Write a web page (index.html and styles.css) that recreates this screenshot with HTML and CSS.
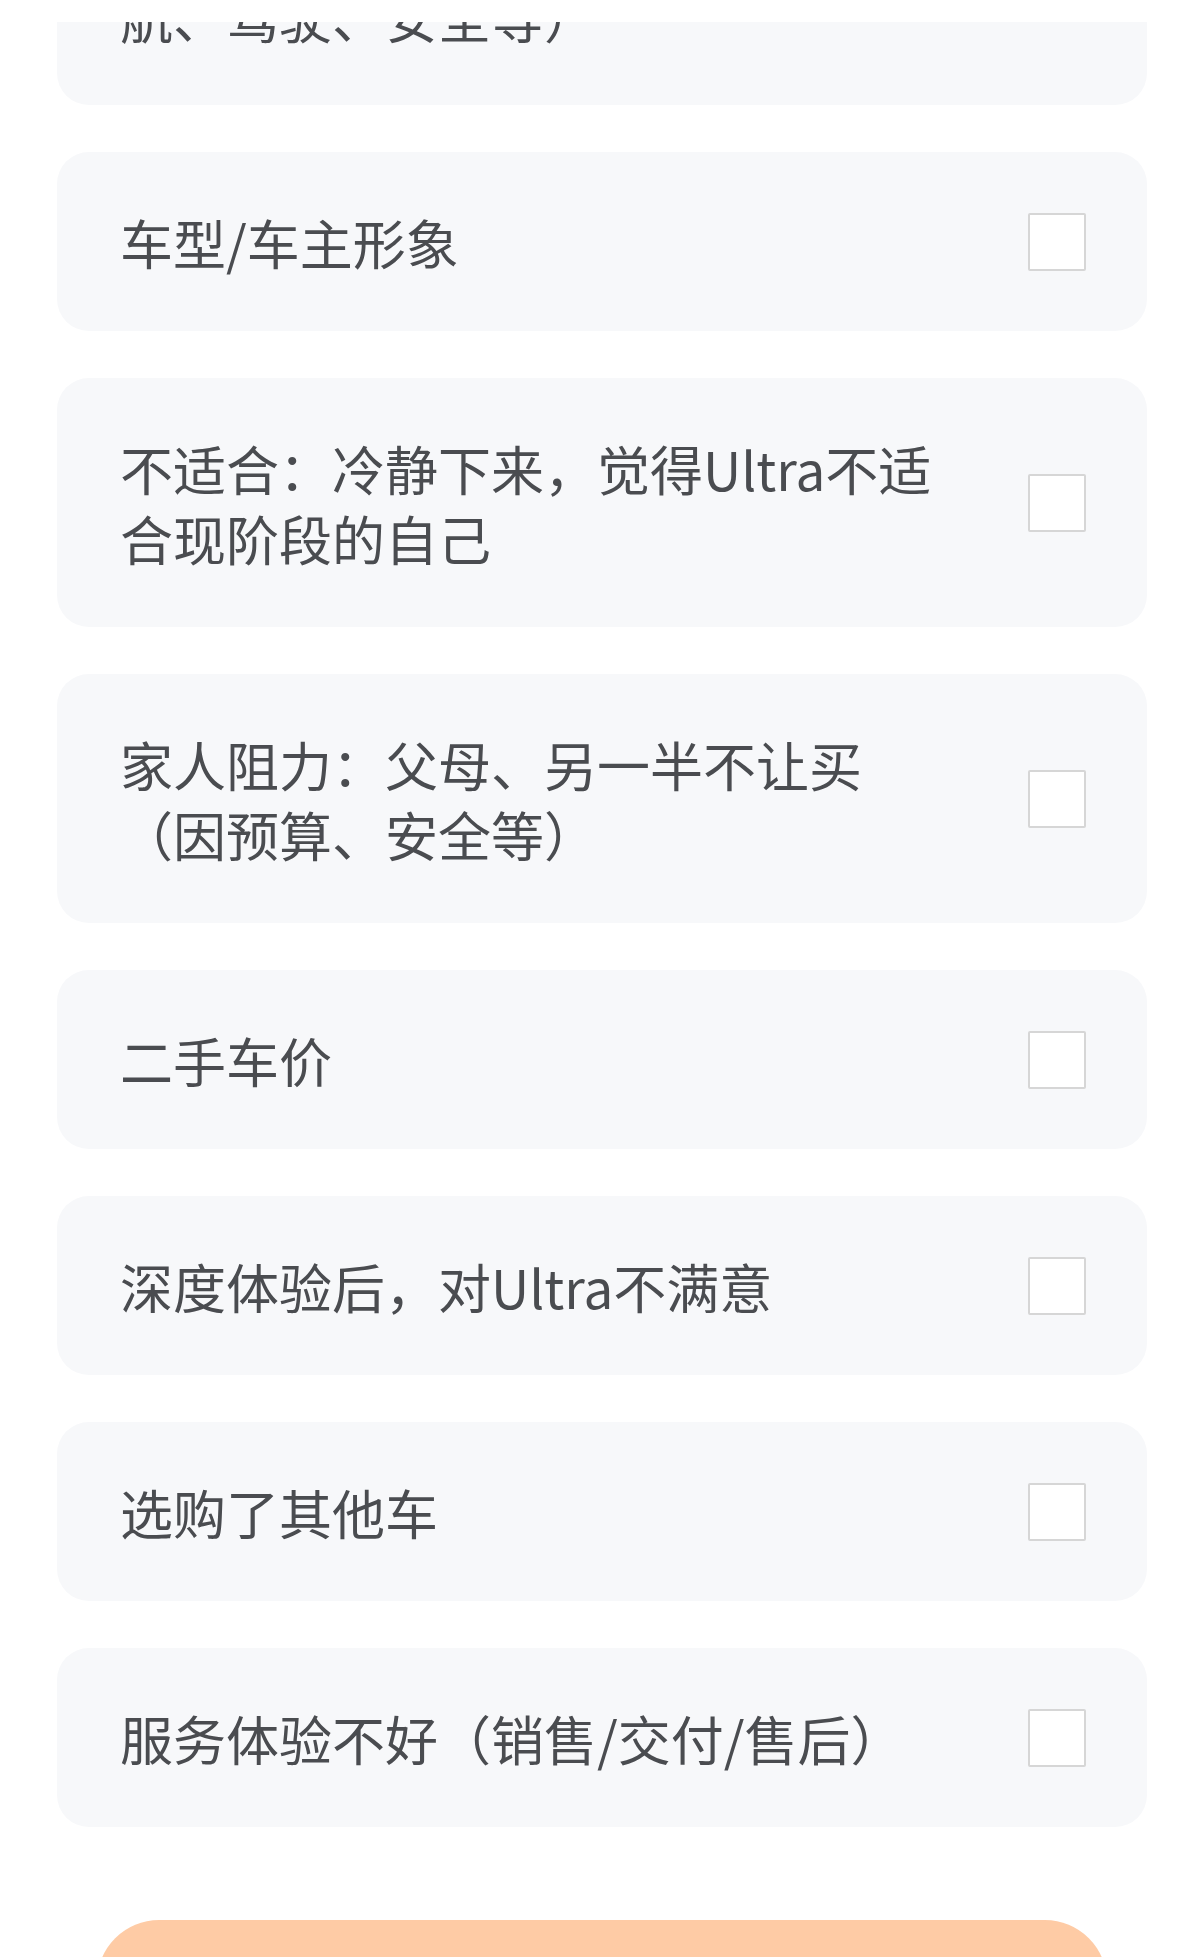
FILE: index.html
```html
<!DOCTYPE html>
<html lang="zh-CN">
<head>
    <meta charset="UTF-8">
    <meta name="viewport" content="width=device-width, initial-scale=1.0">
    <title>放弃原因</title>
    <link rel="stylesheet" href="styles.css">
</head>
<body>
    <div class="screen">
        <form class="options" id="reasonForm">
            <label class="option">
                <span class="option-text">智能化不及预期（智驾、泊车、导航、驾驶、安全等）</span>
                <input type="checkbox" class="check" name="reason" value="smart">
            </label>
            <label class="option">
                <span class="option-text">车型/车主形象</span>
                <input type="checkbox" class="check" name="reason" value="image">
            </label>
            <label class="option">
                <span class="option-text">不适合：冷静下来，觉得Ultra不适合现阶段的自己</span>
                <input type="checkbox" class="check" name="reason" value="unfit">
            </label>
            <label class="option">
                <span class="option-text">家人阻力：父母、另一半不让买（因预算、安全等）</span>
                <input type="checkbox" class="check" name="reason" value="family">
            </label>
            <label class="option">
                <span class="option-text">二手车价</span>
                <input type="checkbox" class="check" name="reason" value="resale">
            </label>
            <label class="option">
                <span class="option-text">深度体验后，对Ultra不满意</span>
                <input type="checkbox" class="check" name="reason" value="experience">
            </label>
            <label class="option">
                <span class="option-text">选购了其他车</span>
                <input type="checkbox" class="check" name="reason" value="other">
            </label>
            <label class="option">
                <span class="option-text">服务体验不好（销售/交付/售后）</span>
                <input type="checkbox" class="check" name="reason" value="service">
            </label>
        </form>
        <div class="actions">
            <button type="submit" form="reasonForm" class="submit">提交</button>
        </div>
    </div>
</body>
</html>
```

FILE: styles.css
```css
body {
    margin: 0;
    padding: 0;
    background: #ffffff;
    font-family: "Noto Sans CJK SC", "Noto Sans", sans-serif;
    color: #4a4c50;
}
.screen {
    border-top: 22px solid #ffffff;
    overflow: hidden;
}
.options {
    display: flex;
    flex-direction: column;
    gap: 47px;
    margin: -166px 57px 0;
}
.option {
    display: flex;
    align-items: center;
    gap: 78px;
    padding: 55px 61px 54px 63px;
    background: #f7f8fa;
    border-radius: 32px;
    cursor: pointer;
}
.option-text {
    flex: 1;
    font-size: 53px;
    line-height: 70px;
}
.check {
    appearance: none;
    -webkit-appearance: none;
    box-sizing: border-box;
    flex: none;
    width: 58px;
    height: 58px;
    margin: 0;
    background: #ffffff;
    border: 2px solid #d6d6d6;
    border-radius: 2px;
    cursor: pointer;
}
.check:checked {
    background: #fdc9a2;
    border-color: #fdc9a2;
}
.actions {
    padding: 93px 97px 60px;
}
.submit {
    display: block;
    width: 100%;
    height: 124px;
    border: none;
    border-radius: 62px;
    background: #fecba5;
    color: #ffffff;
    font-family: inherit;
    font-size: 53px;
    cursor: pointer;
}
```
